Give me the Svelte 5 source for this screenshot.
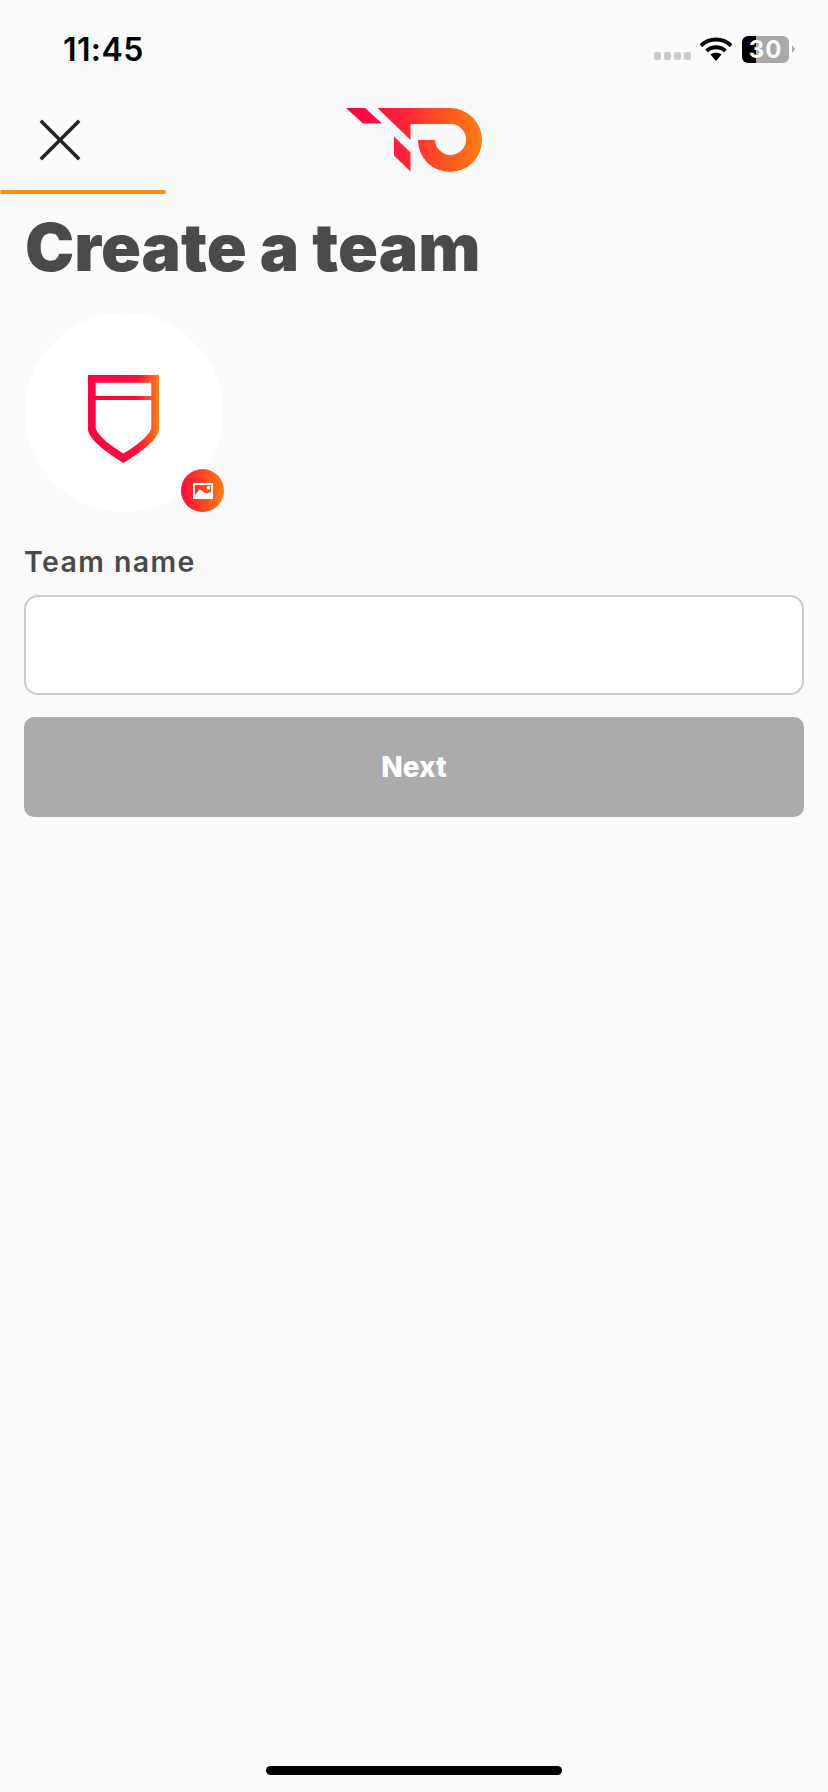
<script lang="ts">
    let teamName = $state('');
</script>

<div class="screen">
    <div class="status-bar">
        <span class="time">11:45</span>
        <div class="status-icons">
            <div class="signal"><i></i><i></i><i></i><i></i></div>
            <svg class="wifi" width="32" height="24" viewBox="0 0 32 24">
                <path d="M1 8.5C9.5 0.5 22.5 0.5 31 8.5" fill="none" stroke="#000" stroke-width="4" />
                <path d="M6.5 14C12 9 20 9 25.500 14" fill="none" stroke="#000" stroke-width="4" />
                <path d="M10.500 17.500C13.500 15 18.500 15 21.500 17.500L16 24Z" fill="#000" />
            </svg>
            <div class="battery"><span>30</span></div>
            <div class="battery-tip"></div>
        </div>
    </div>

    <header class="top-nav">
        <button class="close" aria-label="Close">
            <svg width="42" height="42" viewBox="0 0 42 42">
                <path d="M3 3L39 39M39 3L3 39" stroke="#222" stroke-width="3.500" stroke-linecap="square" />
            </svg>
        </button>
        <svg class="logo" width="137" height="64" viewBox="346 108 137 64">
            <defs>
                <linearGradient id="logoGrad" gradientUnits="userSpaceOnUse" x1="346" y1="0" x2="482" y2="0">
                    <stop offset="0" stop-color="#ff0044" />
                    <stop offset="0.4" stop-color="#ff1f3a" />
                    <stop offset="1" stop-color="#ff8010" />
                </linearGradient>
            </defs>
            <path fill="url(#logoGrad)" d="M346 108H365L382 123.500H363Z" />
            <path fill="url(#logoGrad)" d="M394 136.500L410.500 152.500V171.500L394 155.500Z" />
            <path fill="url(#logoGrad)" d="M377.500 108H450A32 32 0 1 1 418 140H435A15.500 15.500 0 1 0 450 124H410.500V140Z" />
        </svg>
    </header>
    <div class="progress"></div>

    <main class="content">
        <h1>Create a team</h1>

        <div class="avatar">
            <svg class="shield" width="72" height="88" viewBox="0 0 72 88">
                <defs>
                    <linearGradient id="shieldGrad" x1="0" y1="0" x2="1" y2="0">
                        <stop offset="0" stop-color="#ff0044" />
                        <stop offset="0.7" stop-color="#ff0f3c" />
                        <stop offset="1" stop-color="#ff8010" />
                    </linearGradient>
                </defs>
                <path fill="url(#shieldGrad)" fill-rule="evenodd" d="M0 0H71V55C69 66 50 79 35.500 88C21 79 2 66 0 55ZM7.700 7.700V21H63.300V7.700ZM7.700 25V53C10 62 25 72 35.500 78.500C46 72 61 62 63.300 53V25Z" />
            </svg>
            <div class="badge">
                <svg width="20" height="16" viewBox="0 0 20 16">
                    <path fill="#fff" fill-rule="evenodd" d="M0 0H20V16H0ZM2 2V12L6.500 6.500C8.500 6.500 10 9 12 10C14 11 16 9.500 18 9V2ZM15.500 3A1.800 1.800 0 1 1 15.400 6.600A1.800 1.800 0 1 1 15.500 3Z" />
                </svg>
            </div>
        </div>

        <label class="field-label" for="team-name">Team name</label>
        <input id="team-name" class="field-input" type="text" bind:value={teamName} />
        <button class="next" disabled={!teamName}>Next</button>
    </main>

    <div class="home-indicator"></div>
</div>

<style>
    :global(body) {
        margin: 0;
        background: #fafafa;
    }

    .screen {
        position: relative;
        width: 828px;
        height: 1792px;
        background: #fafafa;
        overflow: hidden;
        font-family: Inter, "Liberation Sans", sans-serif;
    }

    .status-bar {
        display: flex;
        align-items: center;
        justify-content: space-between;
        height: 98px;
        padding: 0 33px 0 63px;
        box-sizing: border-box;
    }

    .time {
        font-size: 32px;
        font-weight: 600;
        color: #000;
        letter-spacing: 0.400px;
    }

    .status-icons {
        display: flex;
        align-items: center;
    }

    .signal {
        display: flex;
        gap: 2.500px;
        margin: 14px 9px 0 0;
    }

    .signal i {
        width: 7.500px;
        height: 7.500px;
        border-radius: 2px;
        background: #cbcbcb;
    }

    .wifi {
        margin-right: 10px;
    }

    .battery {
        display: flex;
        align-items: center;
        justify-content: center;
        width: 47px;
        height: 27px;
        border-radius: 6px;
        background: linear-gradient(to right, #000 30%, #a9a9a9 30%);
        color: #fafafa;
        font-size: 24px;
        font-weight: 700;
        letter-spacing: 1px;
    }

    .battery-tip {
        width: 0;
        height: 0;
        margin-left: 3px;
        border-top: 4px solid transparent;
        border-bottom: 4px solid transparent;
        border-left: 3px solid #a9a9a9;
    }

    .top-nav {
        position: relative;
        display: flex;
        align-items: center;
        justify-content: center;
        height: 92px;
    }

    .close {
        position: absolute;
        left: 39px;
        top: 21px;
        padding: 0;
        background: none;
        border: none;
        line-height: 0;
    }

    .logo {
        margin-left: 1px;
        margin-top: -8px;
    }

    .progress {
        width: 166px;
        height: 4px;
        border-radius: 2px;
        background: #ff8c1a;
    }

    .content {
        display: flex;
        flex-direction: column;
        padding: 0 24px;
    }

    h1 {
        margin: 18px 0 0 1px;
        font-size: 66px;
        line-height: 70px;
        font-weight: 900;
        color: #4a4a4a;
    }

    .avatar {
        position: relative;
        display: flex;
        align-items: center;
        justify-content: center;
        width: 198px;
        height: 199px;
        margin: 31px 0 0 1px;
        border-radius: 50%;
        background: #fff;
    }

    .shield {
        margin: 12px 0 0 0;
    }

    .badge {
        position: absolute;
        right: -1px;
        bottom: 0;
        display: flex;
        align-items: center;
        justify-content: center;
        width: 43px;
        height: 43px;
        border-radius: 50%;
        background: linear-gradient(to right, #ff0a3c, #ff7d10);
    }

    .field-label {
        margin-top: 33px;
        font-size: 28.500px;
        line-height: 34px;
        font-weight: 600;
        letter-spacing: 1.400px;
        color: #4a4a4a;
    }

    .field-input {
        box-sizing: border-box;
        width: 780px;
        height: 100px;
        margin-top: 16px;
        border: 2px solid #cccccc;
        border-radius: 14px;
        background: #fff;
        outline: none;
    }

    .next {
        width: 780px;
        height: 100px;
        margin-top: 22px;
        border: none;
        border-radius: 10px;
        background: #ababab;
        color: #fff;
        font-family: inherit;
        font-size: 28px;
        font-weight: 800;
    }

    .home-indicator {
        position: absolute;
        left: 266px;
        bottom: 17px;
        width: 296px;
        height: 9px;
        border-radius: 5px;
        background: #000;
    }
</style>
